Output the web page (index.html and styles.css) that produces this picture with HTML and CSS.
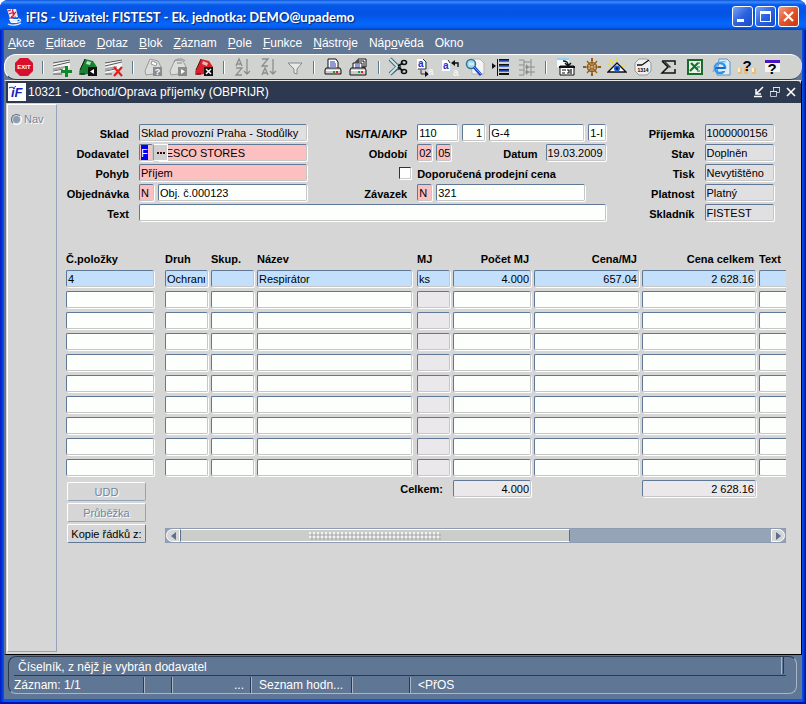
FILE: index.html
```html
<!DOCTYPE html>
<html lang="cs">
<head>
  <meta charset="UTF-8" />
  <title>iFIS - Oprava příjemky</title>
  <link rel="stylesheet" href="styles.css">
</head>
<body>
  <div class="window">
    <header class="titlebar">
      <svg class="app-icon" viewBox="0 0 16 18">
        <path d="M1 1h9l2 8-8 2z" fill="#f6e3e6"/>
        <path d="M2 3l3-1M3 6l5-2M5 9c4-1 2-3 5-5M7 1c-2 3 2 3 0 6M4 10l6-1" stroke="#d2183a" stroke-width="1.2" fill="none"/>
        <path d="M3 11h9l-1 4H5z" fill="#fff"/>
        <path d="M12 11c4 0 3 3-1 3M2 16c4 2 10 1 13-1M4 13h7" stroke="#dfe8fa" stroke-width="1.3" fill="none"/>
      </svg>
      <h1>iFIS - Uživatel: FISTEST - Ek. jednotka: DEMO@upademo</h1>
      <div class="window-buttons">
        <button aria-label="Minimalizovat"><svg viewBox="0 0 19 19"><path d="M4 12h7v3H4z" fill="#fff"/></svg></button>
        <button aria-label="Maximalizovat"><svg viewBox="0 0 19 19"><path d="M4 4h11v11H4zM5 7v7h9V7z" fill="#fff" fill-rule="evenodd"/></svg></button>
        <button class="close" aria-label="Zavřít"><svg viewBox="0 0 19 19"><path d="M5 5l9 9M14 5l-9 9" stroke="#fff" stroke-width="2.2"/></svg></button>
      </div>
    </header>

    <nav class="menu">
      <a href="#"><u>A</u>kce</a>
      <a href="#"><u>E</u>ditace</a>
      <a href="#"><u>D</u>otaz</a>
      <a href="#"><u>B</u>lok</a>
      <a href="#"><u>Z</u>áznam</a>
      <a href="#"><u>P</u>ole</a>
      <a href="#"><u>F</u>unkce</a>
      <a href="#"><u>N</u>ástroje</a>
      <a href="#">Náp<u>o</u>věda</a>
      <a href="#">Okno</a>
    </nav>

    <div class="toolbar">
      <button aria-label="Konec"><svg viewBox="0 0 20 20"><path d="M6 1h8l5 5v8l-5 5H6l-5-5V6z" fill="#d9102c"/><text x="10" y="12" class="exit-text">EXIT</text></svg></button>
      <i></i>
      <button aria-label="Vložit záznam"><svg viewBox="0 0 20 20"><path d="M1 6l17-4v9l-17 6z" fill="#f4f4f4"/><path d="M1 6l17-3M1 9l17-4M1 14l10-2M1 17h9" stroke="#555" fill="none"/><path d="M1 11l12-2v2L1 14z" fill="#aaa"/><path d="M13 9h3v4h4v3h-4v4h-3v-4H9v-3h4z" fill="#0b8a25"/></svg></button>
      <button aria-label="Uložit"><svg viewBox="0 0 20 20"><path d="M1 15L7 2l8 2 4 6-8 7-8 1z" fill="#168532"/><path d="M9 4l4 1-1 3-4-1z" fill="#b9e0bf"/><path d="M1 17h6M7 2L2 13" stroke="#111"/><path d="M10 10h9v9h-9z" fill="#111"/><path d="M16 12v5l-4-2.5z" fill="#fff"/></svg></button>
      <button aria-label="Smazat záznam"><svg viewBox="0 0 20 20"><path d="M1 6l17-4v9l-17 6z" fill="#f4f4f4"/><path d="M1 6l17-3M1 9l17-4M1 14l10-2M1 17h7" stroke="#555" fill="none"/><path d="M1 11l12-2v2L1 14z" fill="#aaa"/><path d="M10 10l8 9M18 10l-8 9" stroke="#e0201c" stroke-width="2.2"/></svg></button>
      <i></i>
      <button aria-label="Dotaz"><svg viewBox="0 0 20 20"><path d="M2 14L7 2l8 2 3 6-8 7-7 1z" fill="#ddd" stroke="#9a9a9a"/><path d="M9 4l5 2-1 3-5-2z" fill="#fff" stroke="#999"/><path d="M10 10h9v9h-9z" fill="#8b8b8b"/><text x="14.5" y="18" class="badge-text">?</text></svg></button>
      <button aria-label="Proveď dotaz"><svg viewBox="0 0 20 20"><path d="M2 14L7 3l8 1 3 6-8 7-7 1z" fill="#ddd" stroke="#9a9a9a"/><path d="M6 5c3-4 8-4 11-1M9 6h5" stroke="#888" fill="none"/><path d="M10 10h9v9h-9z" fill="#8b8b8b"/><path d="M13 12v5l4-2.5z" fill="#fff"/></svg></button>
      <button aria-label="Zruš dotaz"><svg viewBox="0 0 20 20"><path d="M1 15L7 2l8 2 4 6-8 7-8 1z" fill="#d8202a"/><path d="M9 4l5 2-1 3-5-2z" fill="#f2b3b3"/><path d="M1 17h6M7 2L2 13" stroke="#511"/><path d="M10 10h9v9h-9z" fill="#111"/><path d="M12 12l5 5M17 12l-5 5" stroke="#fff" stroke-width="1.4"/></svg></button>
      <i></i>
      <button aria-label="Seřadit vzestupně"><svg viewBox="0 0 20 20"><path d="M3 9l3-7 3 7M4 7h4M3 11h6l-6 7h6M14 2v15M11 14l3 3 3-3" stroke="#8d8d8d" stroke-width="1.3" fill="none"/></svg></button>
      <button aria-label="Seřadit sestupně"><svg viewBox="0 0 20 20"><path d="M3 2h6L3 9h6M3 18l3-7 3 7M4 16h4M14 2v15M11 14l3 3 3-3" stroke="#8d8d8d" stroke-width="1.3" fill="none"/></svg></button>
      <button aria-label="Filtr"><svg viewBox="0 0 20 20"><path d="M3 6h14l-5 6v5l-3-1v-4z" fill="#e8e8e8" stroke="#888"/></svg></button>
      <i></i>
      <button aria-label="Tisk"><svg viewBox="0 0 20 20"><path d="M5 2h8l2 3v7H5z" fill="#fff" stroke="#111"/><path d="M7 5h5M7 7h6M7 9h6" stroke="#2232b0"/><path d="M3 11h14l1 2v4H2v-4z" fill="#ccc" stroke="#111"/><path d="M3 13h14v1H3z" fill="#fff"/><path d="M10 14h2v2h-2z" fill="#18a028"/><path d="M13 14h2v2h-2z" fill="#e02020"/></svg></button>
      <button aria-label="Tisk více"><svg viewBox="0 0 20 20"><path d="M9 2h8v8H9zM7 4h8v8H7z" fill="#fff" stroke="#111"/><path d="M4 6h9v6H4z" fill="#fff" stroke="#111"/><path d="M6 8h5M6 10h5" stroke="#2232b0"/><path d="M2 11h14l1 2v5H1v-5z" fill="#ccc" stroke="#111"/><path d="M2 13h14v1H2z" fill="#fff"/><path d="M9 14h2v2H9z" fill="#18a028"/><path d="M12 14h2v2h-2z" fill="#e02020"/></svg></button>
      <i></i>
      <button aria-label="Vyjmout"><svg viewBox="0 0 20 20"><path d="M2 2l10 10M2 17L12 8" stroke="#456" stroke-width="4"/><path d="M2 2l9 9M2 17l9-9" stroke="#c3e6e8" stroke-width="2.4"/><path d="M10 9l5-3M10 10l5 4" stroke="#111" stroke-width="2"/><ellipse cx="16" cy="5.500" rx="2.500" ry="2" fill="none" stroke="#111" stroke-width="1.600"/><ellipse cx="16" cy="14.500" rx="2.500" ry="2" fill="none" stroke="#111" stroke-width="1.600"/></svg></button>
      <button aria-label="Kopírovat"><svg viewBox="0 0 20 20"><path d="M3 2h6l2 2v8H3z" fill="#fff"/><path d="M9 2l3 3v7H4M7 13v4h5" stroke="#333" fill="none"/><path d="M11 14l4 3-4 3z" fill="#111"/><text x="4" y="10" class="letter blue">a</text><text x="14" y="18" class="letter">a</text></svg></button>
      <button aria-label="Vložit"><svg viewBox="0 0 20 20"><path d="M2 3h6l2 2v9H2z" fill="#fff"/><path d="M8 3l2 3" stroke="#333"/><path d="M13 6h5v4" stroke="#111" fill="none" stroke-width="1.4"/><path d="M15 3v6l-4-3z" fill="#111"/><text x="3" y="12" class="letter blue">a</text><text x="13" y="19" class="letter">a</text></svg></button>
      <button aria-label="Hledat"><svg viewBox="0 0 20 20"><path d="M6 2h9l4 4v11H7z" fill="#f4f4f4" stroke="#b5b5b5"/><circle cx="6" cy="7" r="4.500" fill="#a9dcf0" stroke="#317294" stroke-width="1.500"/><path d="M4 7h5" stroke="#fff"/><path d="M9 10l7 8" stroke="#1747c6" stroke-width="3"/><path d="M9 10l7 7" stroke="#41b5ff"/></svg></button>
      <button aria-label="Seznam hodnot"><svg viewBox="0 0 20 20"><path d="M1 6l4 3-4 3z" fill="#111"/><path d="M6.500 2v17" stroke="#111"/><path d="M8 3h10M8 8h10M8 13h10M8 17h10" stroke="#111" stroke-width="2"/><path d="M8 4h10M8 9h10M8 14h10" stroke="#204bd0" stroke-width="1.300"/></svg></button>
      <button aria-label="Strom"><svg viewBox="0 0 20 20"><path d="M2 3h5v15H2M2 8h5M2 13h5M14 2v17M7 5h7M8 10h10M8 15h10" stroke="#8c8c8c" fill="none"/><path d="M9 7v6l3-3zM9 12v6l3-3z" fill="#8c8c8c"/></svg></button>
      <i></i>
      <button aria-label="Detail"><svg viewBox="0 0 20 20"><path d="M1 2h12v8H1z" fill="#f5fbff"/><path d="M1 2h12" stroke="#8fd2f0" stroke-width="2"/><path d="M7 4c4 0 5 1 5 4M9 6l3 3 3-3" stroke="#111" fill="none" stroke-width="1.500"/><path d="M4 9h14v9H4z" fill="#fff" stroke="#111"/><path d="M3 9h16v2H3z" fill="#111"/><path d="M6 13h4M6 16h3M11 13h2v3h-2M15 12v5" stroke="#111" stroke-width="1.200" fill="none"/></svg></button>
      <button aria-label="Navigace"><svg viewBox="0 0 20 20"><circle cx="10" cy="10" r="4.500" fill="none" stroke="#935b14" stroke-width="1.500"/><path d="M10 2v16M2 10h16M5 4l10 12M15 4L5 16" stroke="#935b14" stroke-width="1.200"/><path d="M9 1h2v3H9zM9 16h2v3H9zM1 9h3v2H1zM16 9h3v2h-3z" fill="#935b14"/><circle cx="10" cy="10" r="1.500" fill="#d9a04a"/></svg></button>
      <button aria-label="Zobrazit"><svg viewBox="0 0 20 20"><path d="M1 7l4 3M3 3l4 4M10 1v4M17 3l-4 4M19 7l-4 3" stroke="#e9e026"/><path d="M1 15l9-9 9 9z" fill="#fff" stroke="#111" stroke-width="1.400"/><circle cx="10" cy="11.500" r="3" fill="#1760df"/><circle cx="10" cy="11.500" r="1.300" fill="#031038"/></svg></button>
      <button aria-label="Kalendář"><svg viewBox="0 0 20 20"><path d="M6 2h8l4 4v8l-4 4H6l-4-4V6z" fill="#eee" stroke="#999"/><path d="M9 8l7-5M4 8h5" stroke="#111" stroke-width="1.300"/><text x="10" y="15" class="clock-text">1314</text></svg></button>
      <button aria-label="Součet"><svg viewBox="0 0 20 20"><path d="M3 4h13v4M3 4l6 6-6 6h13v-4" stroke="#111" stroke-width="1.500" fill="none"/><path d="M4 4h2l6 6-1 1z" fill="#333"/></svg></button>
      <button aria-label="Excel"><svg viewBox="0 0 20 20"><path d="M3 3h14v14H3z" fill="#e9f3e9" stroke="#196a2b" stroke-width="2"/><path d="M6 6l7 7M13 6l-8 8" stroke="#147331" stroke-width="2.200"/><path d="M12 6h3M12 14h3M12 10h3" stroke="#196a2b"/></svg></button>
      <button aria-label="Prohlížeč"><svg viewBox="0 0 20 20"><path d="M8 2h8l3 3v13H6z" fill="#dcecfa" stroke="#5f91c2"/><circle cx="9" cy="11" r="5" fill="none" stroke="#2d93e8" stroke-width="2.600"/><path d="M4 11h10" stroke="#1c68c8" stroke-width="2"/><path d="M11 13h4" stroke="#dcecfa" stroke-width="2"/><path d="M2 15C4 8 9 3 15 5" stroke="#42b7ef" fill="none"/></svg></button>
      <button aria-label="Kontextová nápověda"><svg viewBox="0 0 20 20"><path d="M1 11h4v6H1zM7 11h4v6H7zM15 11h4v6h-4z" fill="#efbd72"/><path d="M1 11h2v4H1zM15 11h2v4h-2z" fill="#fff0ce"/><text x="10" y="14" class="help-text">?</text></svg></button>
      <button aria-label="Nápověda"><svg viewBox="0 0 20 20"><path d="M2 4h15v11H2z" fill="#f4f4f4"/><path d="M2 3h15v3H2z" fill="#4a16c4"/><text x="9" y="17" class="help-text">?</text></svg></button>
    </div>

    <main class="form-window">
      <div class="form-title">
        <svg class="logo" viewBox="0 0 18 18"><path d="M0 0h18v18H0z" fill="#fff"/><text x="3" y="14" class="logo-text">iF</text><path d="M1 5c3-2 5 1 7-2" stroke="#1420c0" fill="none"/></svg>
        <h2>10321 - Obchod/Oprava příjemky (OBPRIJR)</h2>
        <button aria-label="Zmenšit"><svg viewBox="0 0 12 12"><path d="M10 1L4 7M3 3v5h5M1 10.500h8" stroke="#fff" stroke-width="1.500" fill="none"/></svg></button>
        <button aria-label="Obnovit"><svg viewBox="0 0 12 12"><path d="M4.500 5V1.500h6v5H8M1.500 5.500h6v5h-6z" stroke="#bfc5cf" fill="none"/><path d="M4 1.500h7M1 5.500h7" stroke="#e8e8e8"/></svg></button>
        <button aria-label="Zavřít formulář"><svg viewBox="0 0 12 12"><path d="M2 2l8 8M10 2l-8 8" stroke="#fff" stroke-width="1.600"/></svg></button>
      </div>

      <div class="workspace">
        <aside class="side">
          <label><input type="radio" name="nav" disabled> Nav</label>
        </aside>

        <div class="content">
          <form class="fields">
            <label for="sklad">Sklad</label>
            <input id="sklad" class="off" value="Sklad provozní Praha - Stodůlky" readonly>
            <label for="ns">NS/TA/A/KP</label>
            <div class="group">
              <input id="ns" class="w42" value="110">
              <input class="w24 num" value="1" aria-label="TA">
              <input class="w96" value="G-4" aria-label="A">
              <input class="grow" value="1-I" aria-label="KP">
            </div>
            <label for="prijemka">Příjemka</label>
            <input id="prijemka" class="off" value="1000000156" readonly>

            <label for="dodavatel">Dodavatel</label>
            <div class="group">
              <span class="code req"><input id="dodavatel" class="selected" value="F"></span>
              <input class="grow req" value="TESCO STORES" aria-label="Název dodavatele">
              <button type="button" class="lov" aria-label="Seznam dodavatelů"><b></b><b></b><b></b></button>
            </div>
            <label for="obdobi">Období</label>
            <div class="group">
              <input id="obdobi" class="w15 req" value="02">
              <input class="w15 req" value="05" aria-label="Rok">
              <label class="push" for="datum">Datum</label>
              <input id="datum" class="w60 off" value="19.03.2009" readonly>
            </div>
            <label for="stav">Stav</label>
            <input id="stav" class="off" value="Doplněn" readonly>

            <label for="pohyb">Pohyb</label>
            <input id="pohyb" class="req" value="Příjem">
            <input id="cena" class="check" type="checkbox">
            <label class="check-label" for="cena">Doporučená prodejní cena</label>
            <label for="tisk">Tisk</label>
            <input id="tisk" class="off" value="Nevytištěno" readonly>

            <label for="objednavka">Objednávka</label>
            <div class="group">
              <input id="objednavka" class="w15 req" value="N">
              <input class="grow" value="Obj. č.000123" aria-label="Číslo objednávky">
            </div>
            <label for="zavazek">Závazek</label>
            <div class="group">
              <input id="zavazek" class="w15 req" value="N">
              <input class="w150" value="321" aria-label="Číslo závazku">
            </div>
            <label for="platnost">Platnost</label>
            <input id="platnost" class="off" value="Platný" readonly>

            <label for="text">Text</label>
            <input id="text" class="wide">
            <label for="skladnik">Skladník</label>
            <input id="skladnik" class="off" value="FISTEST" readonly>
          </form>

          <table class="items">
            <colgroup>
              <col class="c-id"><col class="c-code"><col class="c-code"><col>
              <col class="c-mj"><col class="c-qty"><col class="c-price"><col class="c-total"><col class="c-text">
            </colgroup>
            <thead>
              <tr>
                <th>Č.položky</th><th>Druh</th><th>Skup.</th><th>Název</th><th>MJ</th>
                <th class="num">Počet MJ</th><th class="num">Cena/MJ</th><th class="num">Cena celkem</th><th>Text</th>
              </tr>
            </thead>
            <tbody id="rows"></tbody>
            <tfoot>
              <tr>
                <td rowspan="2" class="actions">
                  <button disabled>UDD</button>
                  <button disabled>Průběžka</button>
                  <button>Kopie řádků z:</button>
                </td>
                <td colspan="4" class="sum-label">Celkem:</td>
                <td><input class="num pale" value="4.000" aria-label="Celkem počet" readonly></td>
                <td></td>
                <td><input class="num pale" value="2 628.16" aria-label="Celkem cena" readonly></td>
                <td></td>
              </tr>
              <tr>
                <td colspan="8" class="scroll-cell">
                  <div class="scrollbar">
                    <button class="prev" aria-label="Posunout vlevo"><svg viewBox="0 0 5 8"><path d="M5 0v8L0 4z"/></svg></button>
                    <div class="thumb"><span></span></div>
                    <button class="next" aria-label="Posunout vpravo"><svg viewBox="0 0 5 8"><path d="M0 0v8l5-4z"/></svg></button>
                  </div>
                </td>
              </tr>
            </tfoot>
          </table>
        </div>
      </div>
    </main>

    <footer class="status">
      <div class="status-box">
        <div class="message">Číselník, z nějž je vybrán dodavatel</div>
        <div class="status-row">
          <span class="s-record">Záznam: 1/1</span>
          <span class="s-small"></span>
          <span class="s-dots">...</span>
          <span class="s-list">Seznam hodn...</span>
          <span class="s-empty"></span>
          <span class="s-last">&lt;PřOS</span>
        </div>
      </div>
    </footer>
  </div>

  <script>
    const columns = ['Č.položky', 'Druh', 'Skup.', 'Název', 'MJ', 'Počet MJ', 'Cena/MJ', 'Cena celkem', 'Text'];
    const first = ['4', 'Ochranné', '', 'Respirátor', 'ks', '4.000', '657.04', '2 628.16', ''];
    const rowCount = 10;

    function cell(row, col) {
      const cls = [];
      if (col >= 5 && col <= 7) cls.push('num');
      if (row === 0) cls.push('current');
      else if (col === 4) cls.push('pale');
      const value = row === 0 ? first[col] : '';
      return `<td><input class="${cls.join(' ')}" value="${value}" aria-label="${columns[col]} ${row + 1}"></td>`;
    }

    let html = '';
    for (let r = 0; r < rowCount; r++) {
      html += '<tr>' + columns.map((c, i) => cell(r, i)).join('') + '</tr>';
    }
    document.getElementById('rows').innerHTML = html;
  </script>
</body>
</html>
```

FILE: styles.css
```css
:root {
  --slate: #5f7694;
  --navy: #2d394e;
  --panel: #d5d6d5;
  --edge: #5f7896;
  --field: #fdfffd;
  --font: "Liberation Sans", Arial, sans-serif;
}
* { box-sizing: border-box; }
body {
  margin: 0;
  background: #fff;
  font-family: var(--font);
  font-size: 11px;
  color: #000;
}
h1, h2 { margin: 0; }
button, input { font: inherit; color: inherit; padding: 0; margin: 0; }
button { background: none; border: 0; }

.window {
  display: flex;
  flex-direction: column;
  min-height: 100vh;
  padding: 0 4px 5px;
  background: linear-gradient(to right, #001ac0, #0b55f0 4px, #0b55f0 calc(100% - 4px), #0012a0);
  border-radius: 8px 8px 0 0;
  overflow: hidden;
  box-shadow: inset 0 -2px 0 #0012b0;
}

/* title bar */
.titlebar {
  display: flex;
  align-items: center;
  height: 30px;
  margin: 0 -4px;
  padding: 3px 7px 0 6px;
  background: linear-gradient(#0a52dc, #3a8cfa 2px, #0658ea 5px, #0453e4 14px, #0566fd 24px, #0560f0 27px, #0340c0);
}
.app-icon { width: 16px; height: 18px; }
.titlebar h1 {
  flex: 1;
  margin-left: 4px;
  font: bold 13px/18px Lato, sans-serif;
  color: #fff;
  text-shadow: 1px 1px 1px #0a246a;
}
.window-buttons { display: flex; gap: 2px; }
.window-buttons button {
  display: flex;
  width: 21px;
  height: 21px;
  border: 1px solid #fff;
  border-radius: 3px;
  background: linear-gradient(135deg, #7ca4f2, #2a62e0 50%, #1a4cc8);
}
.window-buttons svg { width: 19px; height: 19px; }
.window-buttons .close { background: linear-gradient(135deg, #f0a084, #e2532c 50%, #c33a10); }

/* menu */
.menu {
  display: flex;
  gap: 11px;
  height: 24px;
  padding: 0 4px;
  background: var(--slate);
  line-height: 26px;
  font-size: 12px;
}
.menu a { color: #fff; text-decoration: none; }

/* toolbar */
.toolbar {
  display: flex;
  align-items: center;
  justify-content: space-between;
  height: 26px;
  padding: 0 22px 0 11px;
  background: #d1d3d1;
  border-top: 1px solid #fff;
  border-left: 1px solid #fff;
  border-bottom: 1px solid var(--navy);
  border-radius: 12px;
  box-shadow: 0 0 0 8px var(--slate);
  clip-path: inset(0);
}
.toolbar button {
  display: flex;
  justify-content: center;
  align-items: center;
  width: 15px;
  height: 20px;
}
.toolbar svg { flex: none; width: 20px; height: 20px; }
.toolbar i {
  width: 2px;
  height: 13px;
  background: var(--edge);
  border-right: 1px solid #fff;
}
.exit-text { font: bold 6px "Liberation Sans"; fill: #fff; text-anchor: middle; }
.badge-text { font: bold 9px "Liberation Sans"; fill: #fff; text-anchor: middle; }
.clock-text { font: bold 5px "Liberation Sans"; text-anchor: middle; }
.help-text { font: bold 15px "Liberation Sans"; text-anchor: middle; }
.letter { font: bold 10px "Liberation Sans"; fill: #f4f4f4; }
.letter.blue { fill: #2030d0; }
.logo-text { font: italic bold 13px "Liberation Sans"; fill: #1420c0; }

/* form window */
.form-window {
  display: flex;
  flex-direction: column;
  flex: 1;
  background: var(--panel);
  border-left: 2px solid var(--slate);
  border-right: 1px solid #000;
  border-bottom: 1px solid #000;
  border-top: 1px solid #e8e8e8;
}
.form-title {
  display: flex;
  align-items: center;
  gap: 4px;
  height: 22px;
  padding: 0 4px 0 2px;
  background: var(--navy);
  border-radius: 0 4px 0 0;
}
.form-title h2 {
  flex: 1;
  margin-left: -2px;
  font-size: 12px;
  font-weight: normal;
  color: #fff;
}
.logo { width: 18px; height: 18px; }
.form-title button { display: flex; width: 12px; height: 12px; }
.workspace { display: flex; flex: 1; padding: 1px 0 2px 1px; }
.side {
  width: 50px;
  padding: 8px 3px;
  border: 1px solid #fff;
  border-right-color: #93a3b9;
  border-bottom-color: #93a3b9;
}
.side label {
  display: flex;
  align-items: center;
  gap: 2px;
  color: #7488a2;
  text-shadow: 1px 1px 0 #fff;
}
.side input {
  appearance: none;
  flex: none;
  width: 11px;
  height: 11px;
  border: 1px solid #5d6b7e;
  border-right-color: #fff;
  border-bottom-color: #fff;
  border-radius: 50%;
  background: radial-gradient(circle, #8c9cb2 3px, #d5d6d5 4px);
}
.content { flex: 1; min-width: 0; padding: 20px 15px 0 9px; }

/* header fields */
.fields {
  display: grid;
  grid-template-columns: 67px 167fr 98px 187fr 87px 69fr;
  grid-auto-rows: 17px;
  gap: 3px 6px;
  margin-right: 12px;
}
.fields label {
  padding-right: 4px;
  font-weight: bold;
  line-height: 20px;
  text-align: right;
  white-space: nowrap;
}
.fields input, .items input, .code {
  min-width: 0;
  width: 100%;
  height: 17px;
  padding: 0 2px 0 1px;
  border: 1px solid var(--edge);
  border-right-color: #c6c6c6;
  border-bottom-color: #c6c6c6;
  border-radius: 2px;
  box-shadow: 1px 1px 0 #fff;
  background: var(--field);
  outline: none;
}
.fields .off { background: #e0dfe1; }
.fields .req { background: #fcc0c1; }
.items .pale { background: #eae8eb; }
.items .current { background: #c2dffb; }
.num { text-align: right; }
.group { position: relative; display: flex; gap: 4px; min-width: 0; }
.group .grow { flex: 1; }
.fields .w15 { width: 15px; padding-right: 0; }
.fields .w24 { width: 23px; }
.fields .w42 { width: 41px; }
.fields .w60 { width: 60px; padding-right: 0; }
.fields .w96 { width: 95px; }
.fields .w150 { width: 149px; }
.group .push { margin-left: auto; }
.fields .code { width: 14px; }
.fields .selected {
  display: block;
  width: 7px;
  height: 15px;
  padding: 0;
  border: 0;
  border-radius: 0;
  box-shadow: none;
  background: #0000f8;
  color: #fff;
}
.lov {
  position: absolute;
  left: 14px;
  top: 0;
  display: flex;
  align-items: center;
  justify-content: center;
  gap: 1px;
  width: 15px;
  height: 17px;
  background: #d0d0d0;
  border: 1px solid #fff;
  border-left-color: #8c9bb0;
}
.lov b { width: 2px; height: 2px; background: #400; }
.fields .check {
  appearance: none;
  justify-self: end;
  width: 12px;
  height: 12px;
  margin-top: 3px;
  border-color: #333 #ccc #ccc #333;
  border-radius: 0;
}
.fields .check-label { text-align: left; }
.fields .wide { grid-column: 2 / span 3; }

/* items */
.items {
  width: 100%;
  margin-top: 28px;
  table-layout: fixed;
  border-collapse: collapse;
}
.items th, .items td { padding: 0 3px 0 0; height: 21px; text-align: left; vertical-align: top; }
.items th { white-space: nowrap; line-height: 21px; }
.items th.num { text-align: right; padding-right: 5px; }
.items tbody td:first-child { padding-right: 11px; }
.items tbody td:nth-child(4) { padding-right: 5px; }
.items th:last-child, .items td:last-child { padding-right: 0; }
.items tbody td:last-child input { border-right: 0; border-radius: 2px 0 0 2px; box-shadow: 0 1px 0 #fff; }
.items input { display: block; }
.items input.num { padding-right: 1px; }
.c-id { width: 99px; }
.c-code { width: 46px; }
.c-mj { width: 36px; }
.c-qty { width: 81px; }
.c-price { width: 108px; }
.c-total { width: 117px; }
.c-text { width: 27px; }
.items .actions { padding: 2px 19px 0 1px; }
.actions button {
  display: block;
  width: 100%;
  height: 19px;
  margin-bottom: 2px;
  border: 1px solid #fff;
  border-right-color: var(--edge);
  border-bottom-color: var(--edge);
  border-radius: 2px;
  white-space: nowrap;
}
.actions button:disabled {
  color: #6f86a3;
  border-right-color: #93a3b9;
  border-bottom-color: #93a3b9;
  text-shadow: 1px 1px 0 #fff;
}
.items .sum-label { padding-right: 10px; text-align: right; font-weight: bold; line-height: 19px; }
.items td.scroll-cell { padding: 26px 0 0; }
.scrollbar {
  display: flex;
  justify-content: space-between;
  height: 15px;
  background: #96a4b7;
  border: 1px solid #8d9cb1;
}
.scrollbar button {
  display: flex;
  align-items: center;
  justify-content: center;
  width: 14px;
  background: var(--panel);
  border: 1px solid #fff;
}
.scrollbar .prev { border-radius: 7px 0 0 7px; }
.scrollbar .next { border-radius: 0 7px 7px 0; }
.scrollbar svg { width: 5px; height: 8px; fill: #5a7190; }
.thumb {
  display: flex;
  align-items: center;
  justify-content: center;
  width: 63%;
  margin-right: auto;
  background: #cbcdcb;
  border: 1px solid #fff;
  border-right-color: #5a7190;
  border-left-color: #5a7190;
}
.thumb span {
  width: 132px;
  height: 8px;
  background:
    radial-gradient(circle at 1px 1px, #f0f0f0 1px, transparent 1px) 0 0 / 4px 4px,
    radial-gradient(circle at 3px 3px, #b4b6b4 1px, transparent 1px) 0 0 / 4px 4px;
}

/* status */
.status {
  padding: 1px 5px 5px 4px;
  background: var(--slate);
  color: #fff;
  font-size: 12px;
}
.status-box {
  height: 38px;
  padding: 0 5px;
  border: 1px solid var(--navy);
  border-right-color: #aab6c6;
  border-bottom-color: #aab6c6;
  border-radius: 8px;
}
.message {
  height: 19px;
  margin-right: 5px;
  padding-left: 4px;
  line-height: 20px;
  border-bottom: 1px solid var(--navy);
  background: linear-gradient(#aab6c6, #aab6c6) right 4px top 0 / 1px 17px no-repeat, linear-gradient(var(--navy), var(--navy)) right 2px top 0 / 1px 17px no-repeat;
}
.status-row { display: flex; height: 16px; margin-top: 1px; line-height: 17px; }
.status-row span { padding: 0 7px; border-right: 1px solid #aab6c6; box-shadow: inset -1px 0 0 var(--navy); white-space: nowrap; }
.status-row .s-record { width: 131px; padding-left: 0; }
.s-small { width: 28px; }
.s-dots { width: 79px; text-align: right; }
.s-list { width: 101px; }
.s-empty { width: 58px; }
.status-row .s-last { flex: 1; border: 0; box-shadow: none; }
```
